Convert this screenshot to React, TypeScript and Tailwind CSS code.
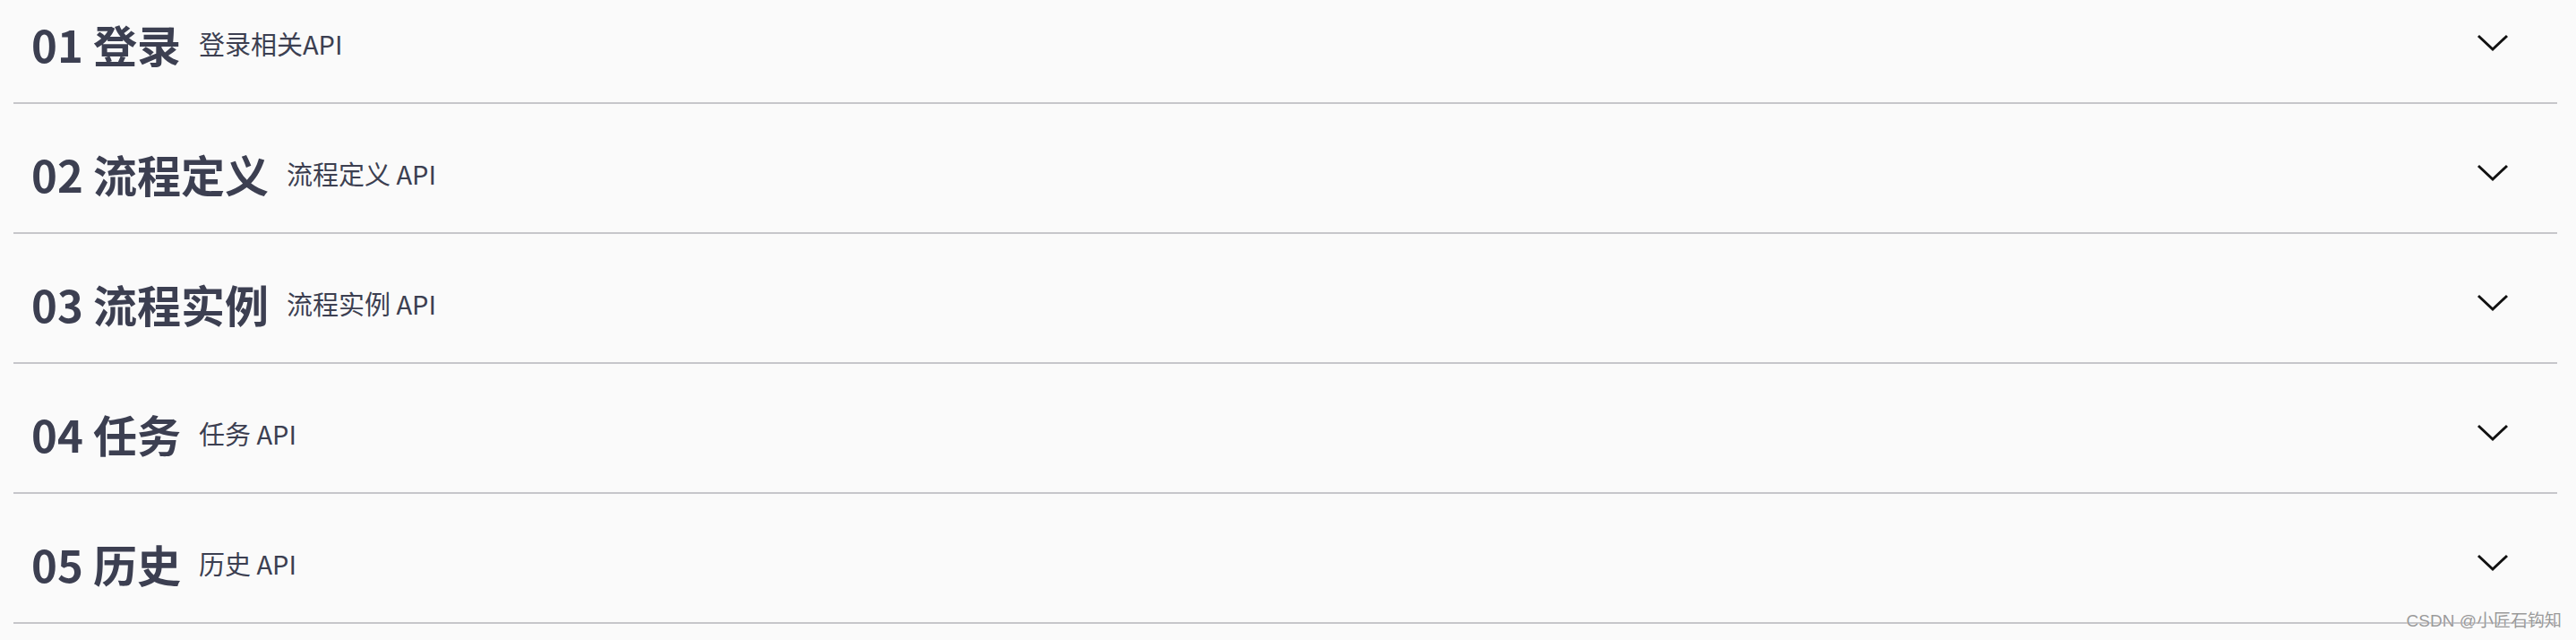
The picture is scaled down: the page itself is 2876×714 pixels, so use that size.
import React from "react";

const rows = [
  { no: "01", title: "登录", sub: "登录相关API" },
  { no: "02", title: "流程定义", sub: "流程定义 API" },
  { no: "03", title: "流程实例", sub: "流程实例 API" },
  { no: "04", title: "任务", sub: "任务 API" },
  { no: "05", title: "历史", sub: "历史 API" },
];

function Chevron() {
  return (
    <svg width="38" height="22" viewBox="0 0 38 22" fill="none">
      <path d="M3 3 L19 18 L35 3" stroke="#111" strokeWidth="3" strokeLinecap="butt" strokeLinejoin="miter" />
    </svg>
  );
}

export default function App() {
  return (
    <div
      className="relative w-[2876px] h-[714px] overflow-hidden bg-[#fafafa]"
      style={{ fontFamily: '"Noto Sans CJK SC", "Noto Sans", sans-serif' }}
    >
      <div className="-mt-[29px] ml-[15px] mr-[21px]">
        {rows.map((r) => (
          <div key={r.no} className="h-[145px] border-b-2 border-[#c6c6ca] flex items-start">
            <div className="mt-[52px] h-[50px] w-full flex items-center pl-[20px] pr-[53px]">
              <div className="text-[49px] leading-none font-bold text-[#3c3f51] whitespace-pre">
                {r.no} {r.title}
              </div>
              <div className="ml-[20px] text-[29px] leading-none font-normal text-[#3c3f51] whitespace-pre">
                {r.sub}
              </div>
              <div className="ml-auto flex items-center">
                <Chevron />
              </div>
            </div>
          </div>
        ))}
      </div>
      <div
        className="absolute right-[16px] top-[683px] text-[19px] leading-none text-[#9a9a9a]"
        style={{ fontFamily: '"Liberation Sans", "Noto Sans CJK SC", sans-serif', textShadow: "0 0 1px #fff" }}
      >
        CSDN @小匠石钩知
      </div>
    </div>
  );
}
